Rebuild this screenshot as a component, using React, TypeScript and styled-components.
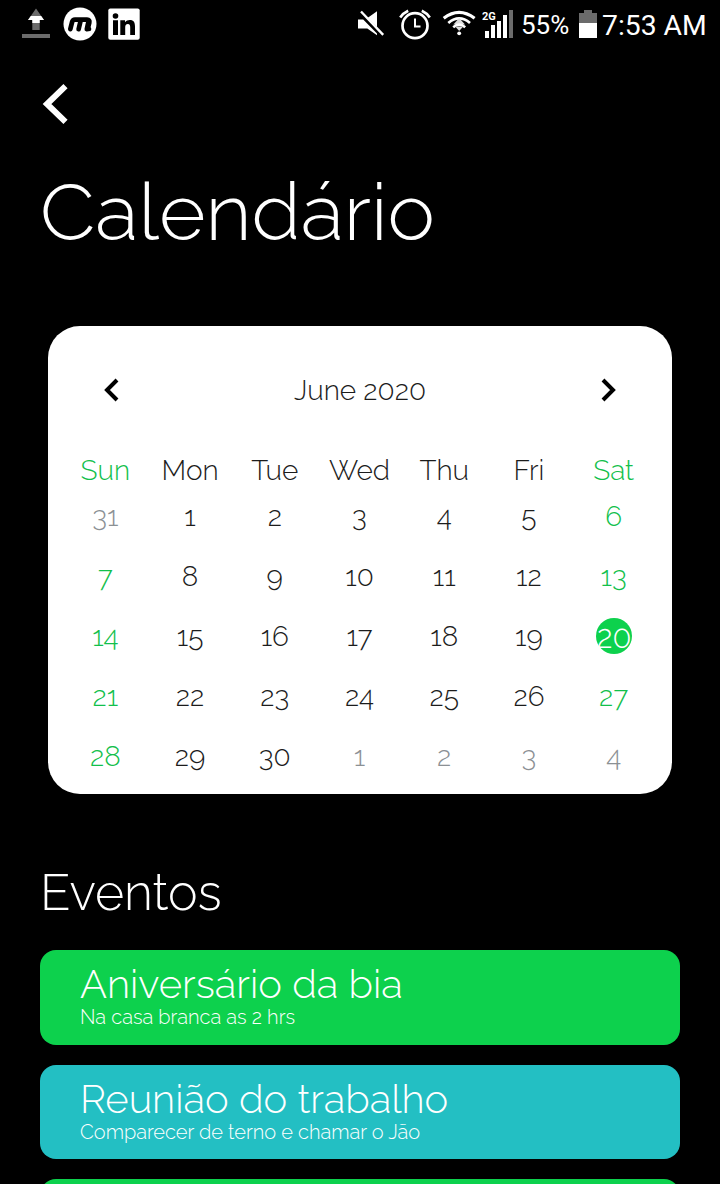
import React from "react";
import styled, { createGlobalStyle } from "styled-components";

const GlobalStyle = createGlobalStyle`
  * { box-sizing: border-box; }
  html, body { margin: 0; padding: 0; background: #000; overflow: hidden; }
`;

const Screen = styled.main`
  width: 720px;
  height: 1184px;
  overflow: hidden;
  display: flex;
  flex-direction: column;
  background: #000;
  color: #fff;
  font-family: Raleway, Lato, "Open Sans", sans-serif;
  font-weight: 300;
  font-variant-numeric: oldstyle-nums;
`;

const StatusBar = styled.header`
  flex: none;
  height: 48px;
  padding: 0 14px 0 20px;
  display: flex;
  align-items: center;
  justify-content: space-between;
  font-family: Roboto, sans-serif;
  font-weight: 400;
  font-variant-numeric: lining-nums;
`;

const StatusGroup = styled.div`
  display: flex;
  align-items: center;
`;

const StatusIcon = styled.span<{ $after: number }>`
  flex: none;
  margin-right: ${(p) => p.$after}px;
  svg { display: block; }
`;

const StatusText = styled.span<{ $size: number; $width: number; $after: number; $drop: number }>`
  font-size: ${(p) => p.$size}px;
  width: ${(p) => p.$width}px;
  margin-right: ${(p) => p.$after}px;
  padding-top: ${(p) => p.$drop * 2}px;
  line-height: ${(p) => 48 - p.$drop * 2}px;
  white-space: nowrap;
`;

const BackButton = styled.button`
  flex: none;
  width: 32px;
  height: 44px;
  margin: 34px 0 0 40px;
  padding: 0;
  border: 0;
  background: none;
  svg { display: block; }
`;

const Title = styled.h1`
  flex: none;
  margin: 38px 0 0 40px;
  height: 96px;
  font-size: 80px;
  line-height: 96px;
  font-weight: 300;
  white-space: nowrap;
`;

const Calendar = styled.section`
  flex: none;
  margin: 66px 48px 0;
  height: 468px;
  padding: 34px 16px 0;
  border-radius: 32px;
  background: #fff;
  color: #1c1c1c;
  font-size: 28px;
`;

const MonthBar = styled.div`
  height: 60px;
  padding: 0 37px;
  display: flex;
  align-items: center;
  justify-content: space-between;
  svg { display: block; }
`;

const Week = styled.div<{ $head?: boolean }>`
  display: grid;
  grid-template-columns: repeat(7, 1fr);
  height: ${(p) => (p.$head ? 46 : 60)}px;
  margin: ${(p) => (p.$head ? 33 : 0)}px 0 0 -1px;
  line-height: 36px;
`;

type Tone = "normal" | "weekend" | "muted" | "today";
const tones: Record<Tone, string> = {
  normal: "#1c1c1c",
  weekend: "#12c04b",
  muted: "#8b9094",
  today: "#fff",
};

const Cell = styled.div<{ $tone: Tone }>`
  display: flex;
  justify-content: center;
  color: ${(p) => tones[p.$tone]};
`;

const Today = styled.span`
  width: 36px;
  height: 36px;
  margin: -1px 0 0 1px;
  display: flex;
  justify-content: center;
  border-radius: 50%;
  background: #0dd14d;
  font-size: 31px;
  line-height: 39px;
`;

const Heading = styled.h2`
  flex: none;
  margin: 67px 0 0 40px;
  height: 64px;
  font-size: 50px;
  line-height: 64px;
  font-weight: 300;
`;

const EventList = styled.div`
  flex: none;
  margin: 25px 40px 0;
  display: flex;
  flex-direction: column;
  gap: 20px;
`;

const EventCard = styled.article<{ $color: string }>`
  height: 94.67px;
  padding: 10px 40px 0;
  border-radius: 16px;
  background: ${(p) => p.$color};
`;

const EventTitle = styled.h3`
  margin: 0;
  font-size: 40px;
  line-height: 48px;
  font-weight: 300;
  white-space: nowrap;
`;

const EventNote = styled.p`
  margin: -1px 0 0;
  font-size: 20px;
  line-height: 20px;
  white-space: nowrap;
`;

const UploadIcon = () => (
  <svg width="32" height="32" viewBox="0 0 32 32">
    <path d="M16 0.5L24 12H19.7V22H12.3V12H8Z" fill="#6b6b6b" />
    <path d="M10.8 8H21.2L24 12H19.7V15H12.3V12H8Z" fill="#fff" />
    <path d="M2 26H30V30H2Z" fill="#6b6b6b" />
  </svg>
);

const MIcon = () => (
  <svg width="34" height="34" viewBox="0 0 34 34">
    <circle cx="17" cy="17" r="16.5" fill="#fff" />
    <path
      d="M7.3 22.2L9.2 14.7Q9.8 12.6 12 12.6H24Q27 12.6 26.3 15.6L25.1 20.5Q24.8 22 26 22M15.6 22.2L17.8 13M23.8 22.2L25.6 14"
      fill="none"
      stroke="#000"
      strokeWidth="4.7"
      strokeLinejoin="round"
      strokeLinecap="round"
    />
  </svg>
);

const LinkedInIcon = () => (
  <svg width="32" height="32" viewBox="0 0 32 32">
    <rect x="0.3" y="0.5" width="31.4" height="31.2" rx="2" fill="#fff" />
    <circle cx="7.5" cy="8" r="2.8" fill="#000" />
    <path
      d="M5 12.3H10V27H5ZM12.3 12.3H17V14.3C18.2 12.6 19.8 11.9 21.7 11.9C25.9 11.9 27 14.6 27 18.5V27H22.2V19.4C22.2 17.5 21.8 16.1 19.9 16.1C17.8 16.1 17.2 17.6 17.2 19.4V27H12.3Z"
      fill="#000"
    />
  </svg>
);

const MuteIcon = () => (
  <svg width="28" height="28" viewBox="0 0 28 28">
    <path d="M1 9.5H6.2L20 23.6V25.2L10.3 18.5H1ZM10.8 7.8L20 1.2V17.3Z" fill="#fff" />
    <path d="M4 1.5L26.2 24.8" stroke="#fff" strokeWidth="2.4" />
  </svg>
);

const AlarmIcon = () => (
  <svg width="32" height="32" viewBox="0 0 32 32" fill="none" stroke="#fff">
    <circle cx="16" cy="17.7" r="12.5" strokeWidth="2.7" />
    <path d="M1.2 9.5Q4.2 5 9.2 2.7M30.8 9.5Q27.8 5 22.8 2.7" strokeWidth="2.6" />
    <path d="M16 10.5V18.5H21.5" strokeWidth="2" />
  </svg>
);

const WifiIcon = () => (
  <svg width="34" height="28" viewBox="0 0 34 28" fill="none" stroke="#fff">
    <path d="M1.7 8.2Q17-3.6 32.6 8.2" strokeWidth="3.2" />
    <path d="M6.3 13Q17.2 3.8 28 13" strokeWidth="2.8" />
    <path d="M17.2 8L23 14.5H11.4Z" fill="#ddd" stroke="none" />
    <path d="M11.2 17.2Q17.2 12.2 23.2 17.2" strokeWidth="2.6" />
    <path d="M13.2 16.5H21.2L17.2 21Z" fill="#ddd" stroke="none" />
    <circle cx="17.2" cy="23.3" r="1.9" fill="#fff" stroke="none" />
  </svg>
);

const SignalIcon = () => (
  <svg width="32" height="30" viewBox="0 0 32 30">
    <path d="M3 22H7V29H3ZM9 16H13V29H9ZM15 12H19V29H15ZM21 6H25V29H21Z" fill="#fff" />
    <path d="M27 1H31V29H27Z" fill="#6b6b6b" />
    <text x="0" y="10.5" fill="#fff" fontFamily="Roboto, sans-serif" fontWeight="700" fontSize="11">2G</text>
  </svg>
);

const BatteryIcon = () => (
  <svg width="18" height="28" viewBox="0 0 18 28">
    <path d="M5 0H13V3H18V13H0V3H5Z" fill="#6b6b6b" />
    <path d="M0 13H18V28H0Z" fill="#fff" />
  </svg>
);

const MonthArrow = ({ next = false }: { next?: boolean }) => (
  <svg width="20" height="26" viewBox="0 0 20 26" fill="none" stroke="#000" strokeWidth="4">
    <path d={next ? "M4 3L14 13L4 23" : "M16 3L6 13L16 23"} />
  </svg>
);

const dayNames = ["Sun", "Mon", "Tue", "Wed", "Thu", "Fri", "Sat"];
const weeks = [
  [31, 1, 2, 3, 4, 5, 6],
  [7, 8, 9, 10, 11, 12, 13],
  [14, 15, 16, 17, 18, 19, 20],
  [21, 22, 23, 24, 25, 26, 27],
  [28, 29, 30, 1, 2, 3, 4],
];

function toneOf(week: number, column: number): Tone {
  const day = weeks[week][column];
  if ((week === 0 && day > 20) || (week === 4 && day < 10)) return "muted";
  if (day === 20) return "today";
  return column === 0 || column === 6 ? "weekend" : "normal";
}

const events = [
  { title: "Aniversário da bia", note: "Na casa branca as 2 hrs", color: "#0dd14d" },
  { title: "Reunião do trabalho", note: "Comparecer de terno e chamar o Jão", color: "#23bfc3" },
  { title: "", note: "", color: "#0dd14d" },
];

export default function App() {
  return (
    <>
      <GlobalStyle />
      <Screen>
        <StatusBar>
          <StatusGroup>
            <StatusIcon $after={11}><UploadIcon /></StatusIcon>
            <StatusIcon $after={11}><MIcon /></StatusIcon>
            <StatusIcon $after={0}><LinkedInIcon /></StatusIcon>
          </StatusGroup>
          <StatusGroup>
            <StatusIcon $after={14}><MuteIcon /></StatusIcon>
            <StatusIcon $after={11}><AlarmIcon /></StatusIcon>
            <StatusIcon $after={6}><WifiIcon /></StatusIcon>
            <StatusIcon $after={7}><SignalIcon /></StatusIcon>
            <StatusText $size={26} $width={46} $after={12} $drop={1}>55%</StatusText>
            <StatusIcon $after={5}><BatteryIcon /></StatusIcon>
            <StatusText $size={28.3} $width={104} $after={0} $drop={2}>7:53 AM</StatusText>
          </StatusGroup>
        </StatusBar>
        <BackButton aria-label="Voltar">
          <svg width="32" height="44" viewBox="0 0 32 44" fill="none" stroke="#fff" strokeWidth="6">
            <path d="M25.5 4.2L7 22L25.5 39.8" />
          </svg>
        </BackButton>
        <Title>Calendário</Title>
        <Calendar>
          <MonthBar>
            <MonthArrow />
            <span>June 2020</span>
            <MonthArrow next />
          </MonthBar>
          <Week $head>
            {dayNames.map((name, i) => (
              <Cell key={name} $tone={i % 6 === 0 ? "weekend" : "normal"}>
                {name}
              </Cell>
            ))}
          </Week>
          {weeks.map((days, w) => (
            <Week key={w}>
              {days.map((day, c) => {
                const tone = toneOf(w, c);
                return (
                  <Cell key={c} $tone={tone}>
                    {tone === "today" ? <Today>{day}</Today> : day}
                  </Cell>
                );
              })}
            </Week>
          ))}
        </Calendar>
        <Heading>Eventos</Heading>
        <EventList>
          {events.map((e, i) => (
            <EventCard key={i} $color={e.color}>
              <EventTitle>{e.title}</EventTitle>
              <EventNote>{e.note}</EventNote>
            </EventCard>
          ))}
        </EventList>
      </Screen>
    </>
  );
}
